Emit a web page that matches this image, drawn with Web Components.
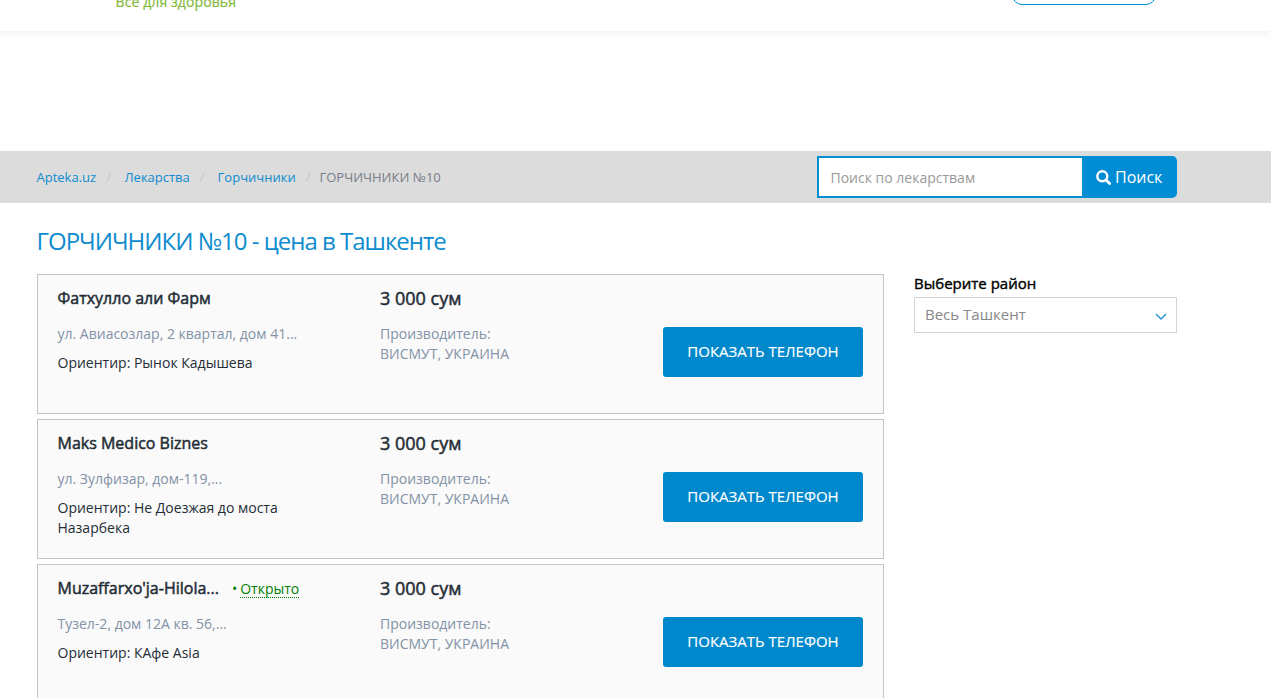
<!DOCTYPE html>
<html lang="ru">
<head>
<meta charset="utf-8">
<title>ГОРЧИЧНИКИ №10</title>
<style>
html,body{margin:0;height:698px;overflow:hidden;background:#fff}
body{font-family:"Open Sans","Noto Sans",sans-serif;font-size:14px;line-height:20px;color:#242d36}
</style>
</head>
<body>
<apteka-page></apteka-page>
<script>
const define = (name, html) => {
  const t = document.createElement('template');
  t.innerHTML = html;
  customElements.define(name, class extends HTMLElement {
    constructor() {
      super();
      this.attachShadow({mode: 'open'}).append(t.content.cloneNode(true));
    }
  });
};

define('site-header', `
<style>
:host{display:flex;justify-content:space-between;align-items:flex-end;box-sizing:border-box;height:31px;padding:0 115px 0 115.5px;background:#fff;box-shadow:0 0 10px rgba(0,0,0,.1)}
.slogan{font:400 14px/20px "Open Sans",sans-serif;color:#83b93a;-webkit-text-stroke:.2px #83b93a;margin-bottom:19px;white-space:nowrap;letter-spacing:.1px}
.button{width:144px;height:38px;box-sizing:border-box;border:1px solid #008dd2;border-radius:10px;margin-bottom:26px}
</style>
<div class="slogan">Все для здоровья</div><div class="button"></div>`);

define('bread-crumbs', `
<style>
:host{display:flex;font-size:13px;line-height:20px;color:#777c8a;white-space:nowrap}
::slotted(a){color:#0e8ccf}
::slotted(i){font-style:normal;color:#c6c6c6}
</style>
<slot></slot>`);

define('search-box', `
<style>
:host{display:flex;width:360px;height:42px}
.field{box-sizing:border-box;width:265px;border:2px solid #008dd4;border-right:0;background:#fff;color:#999;font-size:14px;line-height:40px;padding-left:11.5px}
.go{flex:1;display:flex;align-items:center;background:#008dd4;color:#fff;border-radius:0 5px 5px 0;font-size:16px;line-height:42px;padding-left:14px;box-sizing:border-box}
svg{width:15px;height:15px;margin:1px 4px 0 0}
</style>
<div class="field">Поиск по лекарствам</div>
<div class="go"><svg viewBox="0 0 15 15" fill="none" stroke="#fff"><circle cx="6.3" cy="6.3" r="5" stroke-width="2.4"/><path d="M10 10l3.6 3.6" stroke-width="2.8" stroke-linecap="round"/></svg><span>Поиск</span></div>`);

define('top-bar', `
<style>
:host{display:flex;justify-content:space-between;align-items:center;box-sizing:border-box;height:52px;margin-top:120px;padding:0 94px 0 36.5px;background:#dcdcdc}
</style>
<bread-crumbs><a>Apteka.uz</a><i style="margin:0 13.5px 0 10px">/</i><a>Лекарства</a><i style="margin:0 13px 0 10px">/</i><a>Горчичники</a><i style="margin:0 9px 0 10px">/</i><span>ГОРЧИЧНИКИ №10</span></bread-crumbs>
<search-box></search-box>`);

define('phone-button', `
<style>
:host{display:flex;align-items:center;justify-content:center;box-sizing:border-box;width:200px;height:50px;padding-bottom:2px;border-radius:3px;background:#0088cc;color:#fff;font-size:15px;-webkit-text-stroke:.15px #fff;white-space:nowrap}
</style>
<span>ПОКАЗАТЬ ТЕЛЕФОН</span>`);

define('pharmacy-card', `
<style>
:host{display:grid;grid-template-columns:322.5px 1fr 200px;box-sizing:border-box;height:140px;padding:13px 20px 0 19.5px;border:1px solid #c4c4c4;background:#fafafa;white-space:nowrap}
.row{display:flex;height:20px}
.name{font-size:16px;-webkit-text-stroke:.5px currentColor}
.price{font-size:18px;line-height:20px;-webkit-text-stroke:.5px currentColor}
.muted{color:#8392a7;margin-top:16px}
.mark{margin-top:9px;width:240px;white-space:normal}
phone-button{margin-top:39px}
</style>
<div><div class="row"><span class="name"><slot name="name"></slot></span><slot name="status"></slot></div>
<div class="muted"><slot name="address"></slot></div>
<div class="mark"><slot name="mark"></slot></div></div>
<div><div class="price">3 000 сум</div><div class="muted">Производитель:<br>ВИСМУТ, УКРАИНА</div></div>
<phone-button></phone-button>`);

define('open-status', `
<style>
:host{display:flex;color:#008000;margin:1px 0 0 13px}
b{font-weight:400;margin-right:3px}
span{height:18px;border-bottom:1px dotted #008000}
</style>
<b>•</b><span>Открыто</span>`);

define('district-filter', `
<style>
:host{display:block;width:263px}
.label{font-size:15px;line-height:18px;color:#000;-webkit-text-stroke:.4px #000;white-space:nowrap}
.select{display:flex;justify-content:space-between;align-items:center;box-sizing:border-box;height:36px;margin-top:5px;padding:0 9px 2px 10px;border:1px solid #d4d4d4;background:#fff;color:#888;font-size:15px}
svg{width:12px;height:8px;margin-top:6px}
</style>
<div class="label">Выберите район</div>
<div class="select"><span>Весь Ташкент</span><svg viewBox="0 0 12 8" fill="none" stroke="#2795d6" stroke-width="1.5"><path d="M1 1l5 5 5-5"/></svg></div>`);

define('apteka-page', `
<style>
:host{display:block;height:698px;overflow:hidden}
h1{margin:23px 0 0 36.5px;font-size:24px;line-height:30px;font-weight:400;letter-spacing:-1px;color:#0e8ccf;white-space:nowrap}
main{display:flex;gap:30px;padding:18px 0 0 37px}
.list{display:flex;flex-direction:column;gap:5px;width:847px}
</style>
<site-header></site-header>
<top-bar></top-bar>
<h1>ГОРЧИЧНИКИ №10 - цена в Ташкенте</h1>
<main>
<div class="list">
<pharmacy-card><span slot="name">Фатхулло али Фарм</span><span slot="address">ул. Авиасозлар, 2 квартал, дом 41...</span><span slot="mark">Ориентир: Рынок Кадышева</span></pharmacy-card>
<pharmacy-card><span slot="name">Maks Medico Biznes</span><span slot="address">ул. Зулфизар, дом-119,...</span><span slot="mark">Ориентир: Не Доезжая до моста Назарбека</span></pharmacy-card>
<pharmacy-card><span slot="name">Muzaffarxo'ja-Hilola...</span><open-status slot="status"></open-status><span slot="address">Тузел-2, дом 12А кв. 56,...</span><span slot="mark">Ориентир: КАфе Asia</span></pharmacy-card>
</div>
<district-filter></district-filter>
</main>`);
</script>
</body>
</html>
